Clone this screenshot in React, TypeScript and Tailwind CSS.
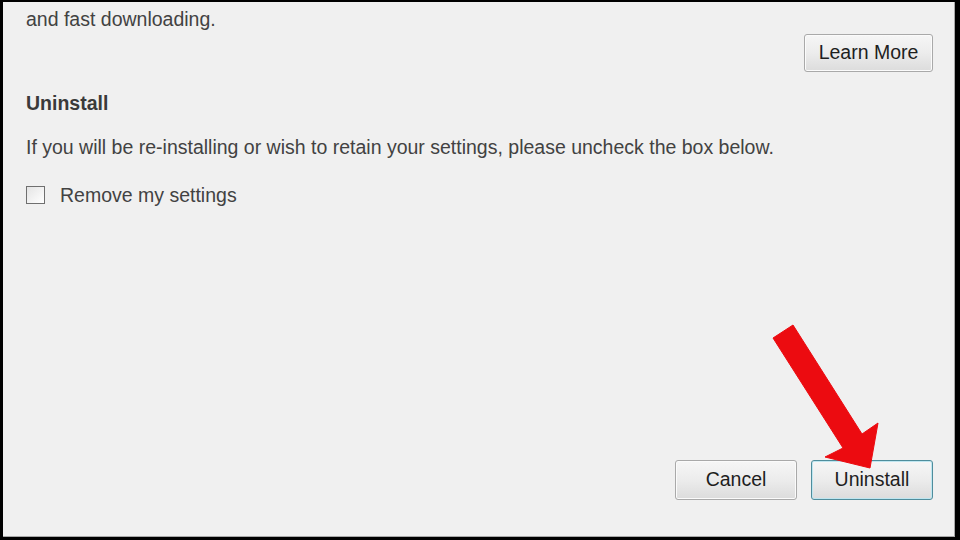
import React from 'react'

function Button({ label, primary = false, className = '' }: { label: string; primary?: boolean; className?: string }) {
  return (
    <button
      className={
        'rounded-[3px] bg-gradient-to-b from-[#f6f6f6] via-[#ececec] to-[#dcdcdc] text-[19.5px] text-[#1e1e1e] ' +
        (primary
          ? 'border border-[#4f8d9c] shadow-[inset_0_0_0_1px_#bfe6f0] '
          : 'border border-[#a9a9a9] shadow-[inset_0_0_0_1px_#fbfbfb] ') +
        className
      }
    >
      {label}
    </button>
  )
}

export default function App() {
  return (
    <div
      className="relative h-[540px] w-[960px] overflow-hidden bg-black pb-[3px] pl-[3px] pr-[5px] pt-[2px]"
      style={{ fontFamily: '"Liberation Sans", Arial, sans-serif' }}
    >
      <div className="flex h-full flex-col border-r border-b border-[#a8a8a8] bg-[#f0f0f0] pl-[23px] pr-[21px] text-[#424242]">
        <p className="mt-[6px] text-[19.5px] leading-[22px]">and fast downloading.</p>

        <div className="mt-[4px] flex justify-end">
          <Button label="Learn More" className="h-[38px] w-[129px]" />
        </div>

        <h2 className="mt-[20px] text-[19.5px] font-bold leading-[22px] text-[#3a3a3a]">Uninstall</h2>

        <p className="mt-[22px] text-[19.5px] leading-[22px]">
          If you will be re-installing or wish to retain your settings, please uncheck the box below.
        </p>

        <label className="mt-[26px] flex items-center gap-[15px] text-[19.5px] leading-[22px]">
          <span className="h-[18px] w-[19px] border border-[#6f6f6f] bg-gradient-to-br from-[#e4e4e4] to-[#ffffff]" />
          Remove my settings
        </label>

        <div className="mt-auto mb-[36px] flex justify-end gap-[14px]">
          <Button label="Cancel" className="h-[40px] w-[122px]" />
          <Button label="Uninstall" primary className="h-[40px] w-[122px]" />
        </div>
      </div>

      {/* red arrow pointing at the Uninstall button */}
      <svg className="pointer-events-none absolute left-0 top-0" width="960" height="540" viewBox="0 0 960 540">
        <polygon
          points="773,338 793,325 862,434 878,423 870,468 825,457 843,448"
          fill="#ec0b10"
          stroke="#ec0b10"
          strokeWidth="1"
          strokeLinejoin="round"
        />
      </svg>
    </div>
  )
}
